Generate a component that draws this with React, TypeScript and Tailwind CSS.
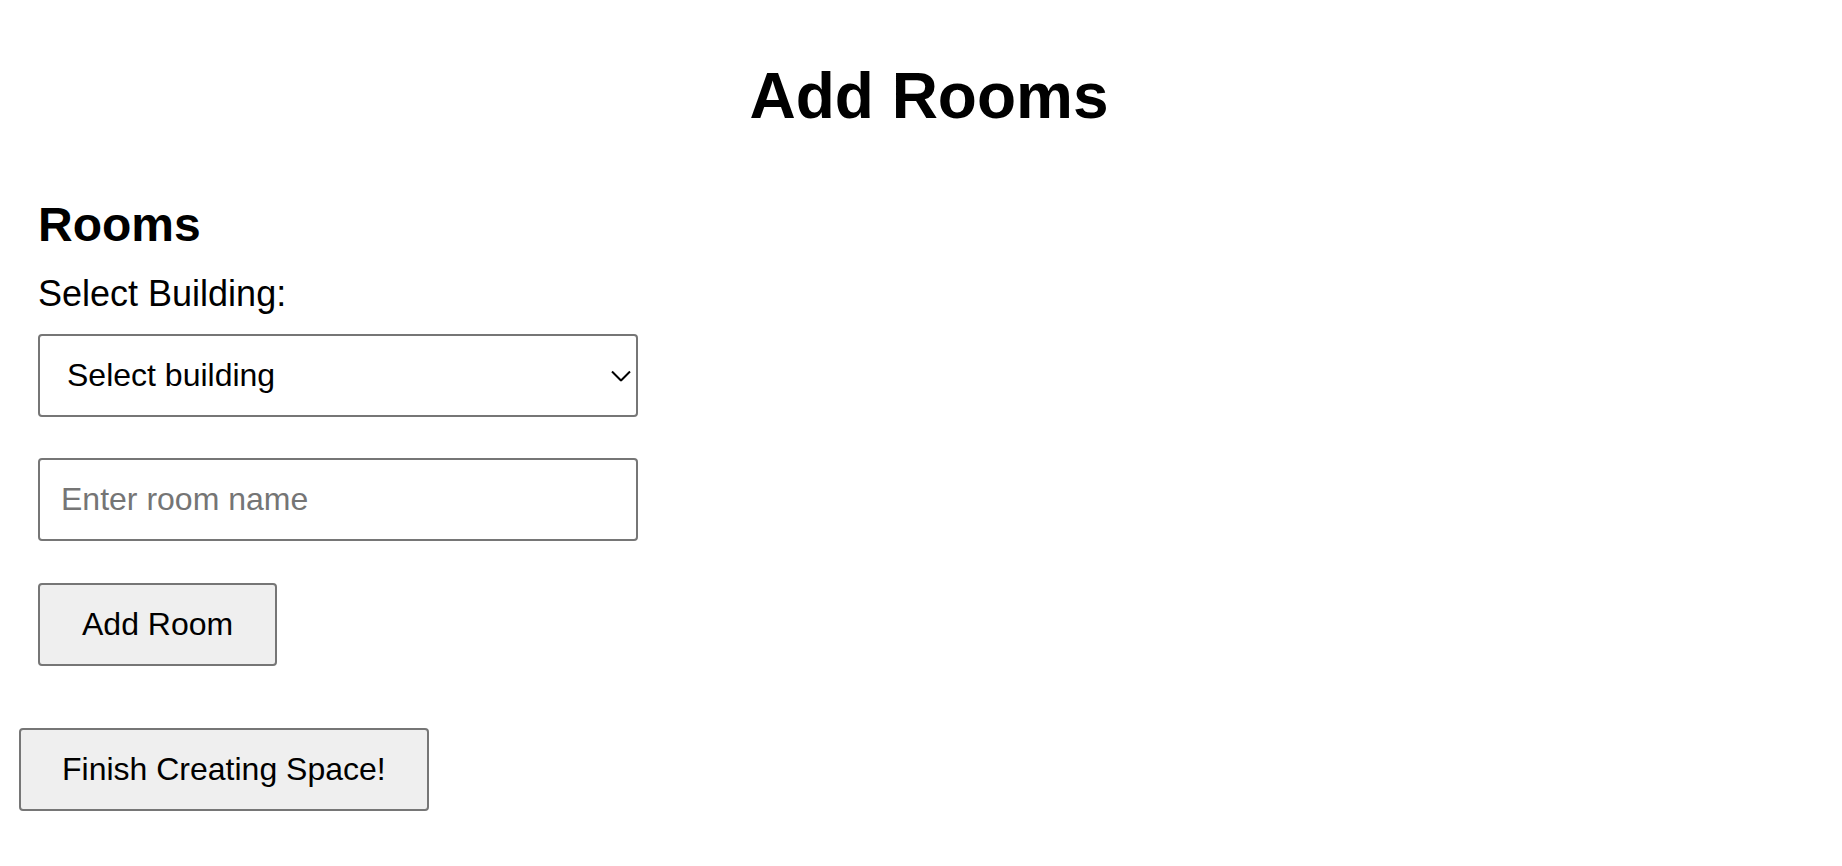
import React from 'react';

const font = "font-['Liberation_Sans',Arial,sans-serif]";

const Chevron: React.FC = () => (
    <svg
        className="pointer-events-none absolute right-[7px] top-1/2 -translate-y-1/2"
        width="20"
        height="11"
        viewBox="0 0 20 11"
        fill="none"
    >
        <polyline points="1,1 10,10 19,1" stroke="#000" strokeWidth="2" />
    </svg>
);

const App: React.FC = () => {
    return (
        <div className={`min-h-screen bg-white text-black px-[19px] pb-10 ${font}`}>
            <h1 className="pt-[59px] pl-[16px] text-center text-[64px] font-bold leading-[74px]">Add Rooms</h1>

            <div className="mt-[64px] px-[19px]">
                <h2 className="text-[48px] font-bold leading-[55px]">Rooms</h2>
                <label className="mt-[21px] block text-[36px] leading-[41px]">Select Building:</label>

                <div className="relative mt-[20px] w-[600px]">
                    <select
                        defaultValue=""
                        className="block h-[83px] w-full appearance-none rounded-[4px] border-2 border-[#767676] bg-white pl-[27px] pr-10 text-[32px] leading-[37px] text-black outline-none"
                    >
                        <option value="">Select building</option>
                    </select>
                    <Chevron />
                </div>

                <input
                    type="text"
                    placeholder="Enter room name"
                    className="mt-[41px] block h-[83px] w-[600px] rounded-[4px] border-2 border-[#767676] bg-white px-[21px] text-[32px] leading-[37px] text-black outline-none placeholder:text-[#757575]"
                />

                <button className="mt-[42px] block h-[83px] rounded-[4px] border-2 border-[#767676] bg-[#efefef] px-[42px] text-[32px] leading-[37px] text-black">
                    Add Room
                </button>
            </div>

            <button className="mt-[62px] block h-[83px] rounded-[4px] border-2 border-[#767676] bg-[#efefef] px-[41px] text-[32px] leading-[37px] text-black">
                Finish Creating Space!
            </button>
        </div>
    );
};

export default App;
